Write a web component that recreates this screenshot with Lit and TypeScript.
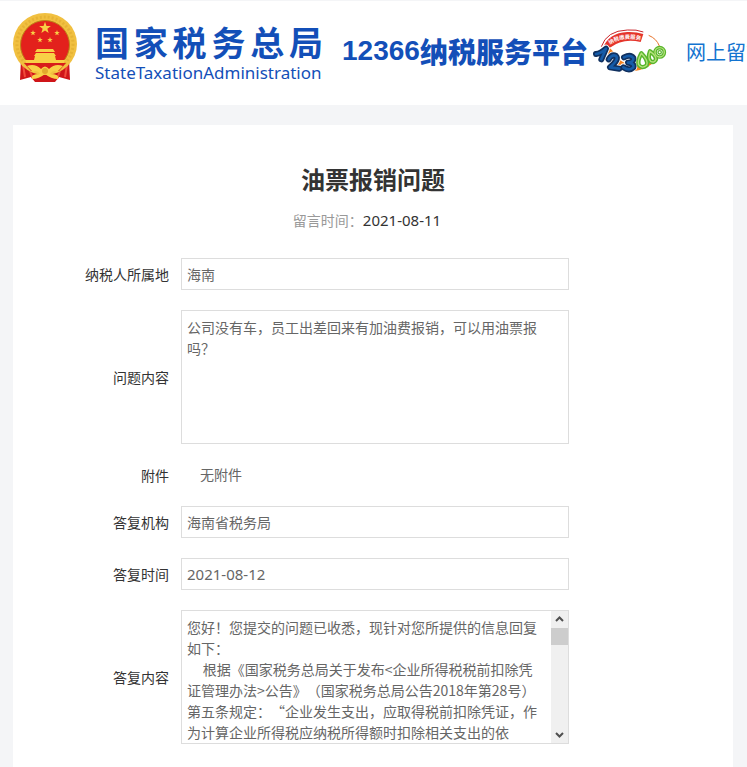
import { LitElement, html, css } from "lit";
import { customElement } from "lit/decorators.js";

const STAR = "M0-10L2.4-3.1L9.5-3.1L3.8 1.2L5.9 8.1L0 4L-5.9 8.1L-3.8 1.2L-9.5-3.1L-2.4-3.1Z";

const DIGITS =
  "M18 78Q32 76 48 62L34 94M56 94Q66 78 78 84Q88 94 60 118L88 122M102 88Q122 78 130 90Q132 102 114 104Q134 106 130 118Q118 130 100 118";

const QUESTION = "公司没有车，员工出差回来有加油费报销，可以用油票报\n吗？";

const ANSWER = [
  "您好！您提交的问题已收悉，现针对您所提供的信息回复",
  "如下：",
  "     根据《国家税务总局关于发布<企业所得税税前扣除凭",
  "证管理办法>公告》（国家税务总局公告2018年第28号）",
  "第五条规定：“企业发生支出，应取得税前扣除凭证，作",
  "为计算企业所得税应纳税所得额时扣除相关支出的依",
  "据。”",
].join("\n");

@customElement("site-header")
export class SiteHeader extends LitElement {
  static styles = css`
    :host { display: block; }
    .bar {
      box-sizing: border-box;
      display: flex;
      align-items: center;
      height: 105px;
      padding: 0 0 0 13px;
      border-top: 1px solid #f4f5f7;
      background: #fff;
      overflow: hidden;
      white-space: nowrap;
    }
    .bar > * { flex: none; }
    .emblem { display: block; width: 64px; height: 70px; margin-bottom: 10px; }
    .brand { width: 228px; margin: 0 0 0 18px; color: #134fb8; }
    .name {
      font: 700 34px/40px "Noto Sans CJK SC", sans-serif;
      text-align: justify;
      text-align-last: justify;
    }
    .english { font: 400 17px/22px "Noto Sans", sans-serif; }
    .platform {
      display: flex;
      align-items: center;
      margin: 0 0 4px 19px;
      color: #134fb8;
      font: 900 28px/40px "Noto Sans CJK SC", sans-serif;
    }
    .number { font: 700 28px/40px "Liberation Sans", sans-serif; }
    .hotline { display: block; width: 80px; height: 50px; margin-left: 2px; }
    .slogan { font: 700 16px "Noto Sans CJK SC", sans-serif; }
    .link {
      margin: 0 0 2px 16px;
      color: #1273d0;
      font: 400 20px/30px "Noto Sans CJK SC", sans-serif;
      text-decoration: none;
    }
  `;

  render() {
    return html`
      <header class="bar">
        <svg class="emblem" viewBox="0 0 64 70" aria-hidden="true">
          <path d="M8 46L7 67L18 64L22 69H42L46 64L57 67L56 46Z" fill="#cf1519" />
          <path d="M10 52L12 64M54 52L52 64M17 58L20 66M47 58L44 66" stroke="#f14a3a" stroke-width="2" />
          <ellipse cx="32" cy="31" rx="32" ry="31" fill="#f1c040" />
          <ellipse cx="32" cy="31" rx="28" ry="27" fill="none" stroke="#e6b335" stroke-width="3" stroke-dasharray="2 2" />
          <circle cx="32" cy="32" r="24.5" fill="#e3211c" stroke="#bd8418" />
          <path d="M11 50H53L46 58H18Z" fill="#d81c1b" />
          <g fill="#f8d046">
            <path transform="translate(32 15) scale(.62)" d=${STAR} />
            <path transform="translate(20 20) scale(.29)" d=${STAR} />
            <path transform="translate(44 20) scale(.29)" d=${STAR} />
            <path transform="translate(27 27) scale(.29)" d=${STAR} />
            <path transform="translate(37 27) scale(.29)" d=${STAR} />
            <path d="M24 36H40L42 39H22ZM23 40H41L43 43H21ZM22 43H42L43 47H21ZM12 47H52L51 50H13Z" />
            <path d="M14 53Q22 50 28 56Q32 51 36 56Q42 50 50 53L44 59Q40 56 37 61Q47 61 45 66Q38 66 32 61Q26 66 19 66Q17 61 27 61Q24 56 20 59Z" />
          </g>
          <circle cx="32" cy="58" r="3" fill="#e2a92d" />
        </svg>
        <div class="brand">
          <div class="name">国家税务总局</div>
          <div class="english">StateTaxationAdministration</div>
        </div>
        <div class="platform"><span class="number">12366</span><span>纳税服务平台</span></div>
        <svg class="hotline" viewBox="0 0 240 150" aria-hidden="true">
          <path d="M48 60Q34 84 54 104Q86 130 130 130Q176 124 200 94Q166 112 140 110Q88 98 62 62Z" fill="#f58220" />
          <path d="M84 92L150 72L144 112Q110 112 84 92Z" fill="#fff" />
          <path d="M34 56Q50 8 112 6Q140 4 160 12" fill="none" stroke="#c9252b" stroke-width="3" />
          <path d="M176 22Q200 32 208 54" fill="none" stroke="#e8742c" stroke-width="3" />
          <path d="M38 62Q56 14 112 12Q138 11 160 18L152 42Q98 30 62 58Z" fill="#e5352b" />
          <path id="slogan-arc" d="M60 50Q92 24 154 37" fill="none" />
          <text class="slogan" fill="#fff"><textPath href="#slogan-arc">纳税缴费服务</textPath></text>
          <g fill="none" stroke-linecap="round" stroke-linejoin="round">
            <path d=${DIGITS} stroke="#fff" stroke-width="23" />
            <path d=${DIGITS} stroke="#10305f" stroke-width="18" />
            <path d=${DIGITS} stroke="#155ba8" stroke-width="8" />
          </g>
          <g fill="#fff" stroke="#58b52b" stroke-width="13" stroke-linejoin="round">
            <path d="M154 76Q142 98 146 110Q156 124 170 112Q176 98 154 76Z" />
            <path d="M180 70Q172 90 182 100Q194 106 198 94Q198 82 180 70Z" />
            <circle cx="209" cy="73" r="14" stroke-width="11" />
            <circle cx="209" cy="73" r="5" stroke-width="4" />
          </g>
          <g fill="none" stroke="#b5e27c" stroke-width="4">
            <path d="M154 76Q142 98 146 110Q156 124 170 112Q176 98 154 76Z" />
            <path d="M180 70Q172 90 182 100Q194 106 198 94Q198 82 180 70Z" />
            <circle cx="209" cy="73" r="14" />
          </g>
        </svg>
        <a class="link" href="#">网上留言</a>
      </header>
    `;
  }
}

@customElement("app-root")
export class AppRoot extends LitElement {
  static styles = css`
    :host {
      display: flow-root;
      min-height: 100vh;
      background: #f4f5f7;
      font: 400 14px/21px "Noto Sans", "Noto Sans CJK SC", sans-serif;
      color: #333;
      text-spacing-trim: space-all;
    }
    .card {
      box-sizing: border-box;
      margin: 20px 14px 0 13px;
      padding: 36px 0 23px;
      min-height: calc(100vh - 125px);
      background: #fff;
    }
    h1 { margin: 0; text-align: center; font-size: 24px; line-height: 38px; }
    .posted {
      margin: 11px 0 27px;
      padding-right: 12px;
      text-align: center;
      color: #999;
    }
    .posted time { color: #333; font-size: 15px; }
    .form {
      display: grid;
      grid-template-columns: 156px minmax(0, 388px);
      gap: 20px 12px;
      align-items: center;
    }
    .label { text-align: right; }
    .box {
      box-sizing: border-box;
      display: block;
      width: 100%;
      margin: 0;
      border: 1px solid #ddd;
      border-radius: 0;
      background: #fff;
      color: #666;
      font: inherit;
      outline: none;
    }
    input.box { height: 32px; padding: 0 5px; }
    input.date { font-size: 15px; }
    textarea {
      resize: none;
      white-space: pre-wrap;
      scrollbar-width: none;
      text-spacing-trim: space-all;
    }
    textarea.box { height: 134px; padding: 6px 5px; }
    .none { padding-left: 19px; color: #666; line-height: 22px; }
    .scroller { display: flex; height: 134px; }
    .scroller textarea {
      flex: 1;
      min-width: 0;
      box-sizing: border-box;
      margin: 0;
      padding: 6px 0 0 5px;
      border: 0;
      outline: none;
      background: none;
      color: inherit;
      font: 400 14px/21px "Noto Sans CJK SC", sans-serif;
    }
    .track {
      display: flex;
      flex-direction: column;
      width: 17px;
      background: #f0f0f0;
    }
    .track button {
      height: 17px;
      padding: 0;
      border: 0;
      background: none;
    }
    .track svg { display: block; width: 17px; height: 17px; }
    .thumb { height: 17px; margin-bottom: auto; background: #cdcdcd; }
  `;

  private scrollAnswer(lines: number) {
    this.renderRoot.querySelector("#answer")?.scrollBy({ top: lines * 21 });
  }

  render() {
    return html`
      <site-header></site-header>
      <main class="card">
        <h1>油票报销问题</h1>
        <p class="posted">留言时间：<time>2021-08-11</time></p>
        <form class="form">
          <label class="label" for="region">纳税人所属地</label>
          <input class="box" id="region" readonly .value=${"海南"} />
          <label class="label" for="question">问题内容</label>
          <textarea class="box" id="question" readonly .value=${QUESTION}></textarea>
          <span class="label">附件</span>
          <span class="none">无附件</span>
          <label class="label" for="office">答复机构</label>
          <input class="box" id="office" readonly .value=${"海南省税务局"} />
          <label class="label" for="replied">答复时间</label>
          <input class="box date" id="replied" readonly .value=${"2021-08-12"} />
          <label class="label" for="answer">答复内容</label>
          <div class="box scroller">
            <textarea id="answer" readonly .value=${ANSWER}></textarea>
            <div class="track">
              <button type="button" aria-label="向上滚动" @click=${() => this.scrollAnswer(-1)}>
                <svg viewBox="0 0 34 34"><path d="M10 20L17 13L24 20" fill="none" stroke="#505050" stroke-width="4" /></svg>
              </button>
              <div class="thumb"></div>
              <button type="button" aria-label="向下滚动" @click=${() => this.scrollAnswer(1)}>
                <svg viewBox="0 0 34 34"><path d="M10 14L17 21L24 14" fill="none" stroke="#505050" stroke-width="4" /></svg>
              </button>
            </div>
          </div>
        </form>
      </main>
    `;
  }
}
